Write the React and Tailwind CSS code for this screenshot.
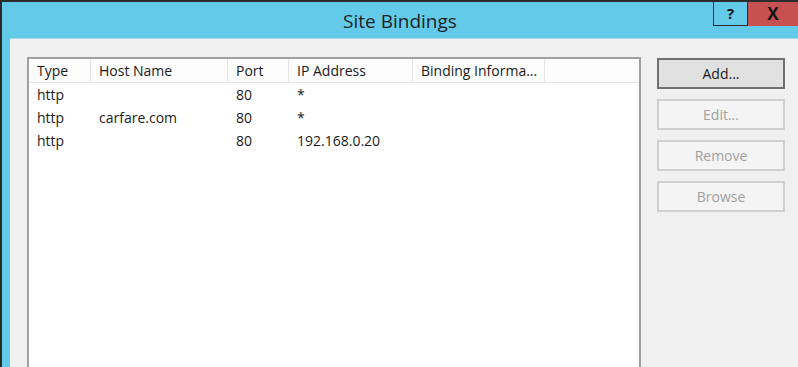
import React from "react";

const columns = [
  { label: "Type", w: "w-[62px]" },
  { label: "Host Name", w: "w-[137px]" },
  { label: "Port", w: "w-[61px]" },
  { label: "IP Address", w: "w-[124px]" },
  { label: "Binding Informa...", w: "w-[132px]" },
];

const rows = [
  ["http", "", "80", "*"],
  ["http", "carfare.com", "80", "*"],
  ["http", "", "80", "192.168.0.20"],
];

const widths = ["w-[62px]", "w-[137px]", "w-[61px]", "w-[124px]"];

function DialogButton({ children, primary }) {
  return (
    <button
      className={
        "h-[31px] w-[128px] text-[14px] " +
        (primary
          ? "border-2 border-[#707070] bg-[#e1e1e1] text-[#1a1a1a]"
          : "border-2 border-[#d0d0d0] bg-[#f4f4f4] text-[#a0a0a0]")
      }
    >
      {children}
    </button>
  );
}

export default function App() {
  return (
    <div
      className="w-[798px] h-[367px] overflow-hidden bg-[#2b2b2b] pt-[2px] pl-[2px] flex flex-col"
      style={{ fontFamily: "'Open Sans', 'Noto Sans', sans-serif" }}
    >
      {/* Title bar */}
      <div className="h-[36px] bg-[#63cbe9] flex relative">
        <div className="flex-1 flex items-center justify-center text-[19px] text-[#1e1e1e] pt-[2px]">
          Site Bindings
        </div>
        <div className="absolute right-0 top-0 flex">
          <div className="w-[35px] h-[24px] border border-t-0 border-[#2b2b2b] flex items-center justify-center text-[15px] font-bold text-[#111]">
            ?
          </div>
          <div className="w-[50px] h-[24px] bg-[#c75050] flex items-center justify-center text-[17px] font-bold text-[#111]">
            X
          </div>
        </div>
      </div>

      <div className="flex-1 flex">
        {/* Left frame */}
        <div className="w-[8px] bg-[#63cbe9]" />

        {/* Client area */}
        <div className="flex-1 bg-[#f0f0f0] flex pl-[17px] pt-[18px] border-t border-[#a9d9ea]">
          {/* List */}
          <div className="w-[614px] bg-white border-2 border-b-0 border-[#a0a0a0] flex flex-col text-[14px] text-[#1a1a1a]">
            <div className="flex h-[24px] bg-[#fcfcfc] border-b border-[#e5e5e5]">
              {columns.map((c) => (
                <div
                  key={c.label}
                  className={c.w + " border-r border-[#e5e5e5] pl-[8px] flex items-center"}
                >
                  {c.label}
                </div>
              ))}
            </div>
            {rows.map((r, i) => (
              <div key={i} className="flex h-[23px] items-center">
                {r.map((cell, j) => (
                  <div key={j} className={widths[j] + " pl-[8px]"}>
                    {cell}
                  </div>
                ))}
              </div>
            ))}
          </div>

          {/* Buttons */}
          <div className="ml-[16px] flex flex-col gap-[10px] pt-[1px]">
            <DialogButton primary>Add...</DialogButton>
            <DialogButton>Edit...</DialogButton>
            <DialogButton>Remove</DialogButton>
            <DialogButton>Browse</DialogButton>
          </div>
        </div>
      </div>
    </div>
  );
}
